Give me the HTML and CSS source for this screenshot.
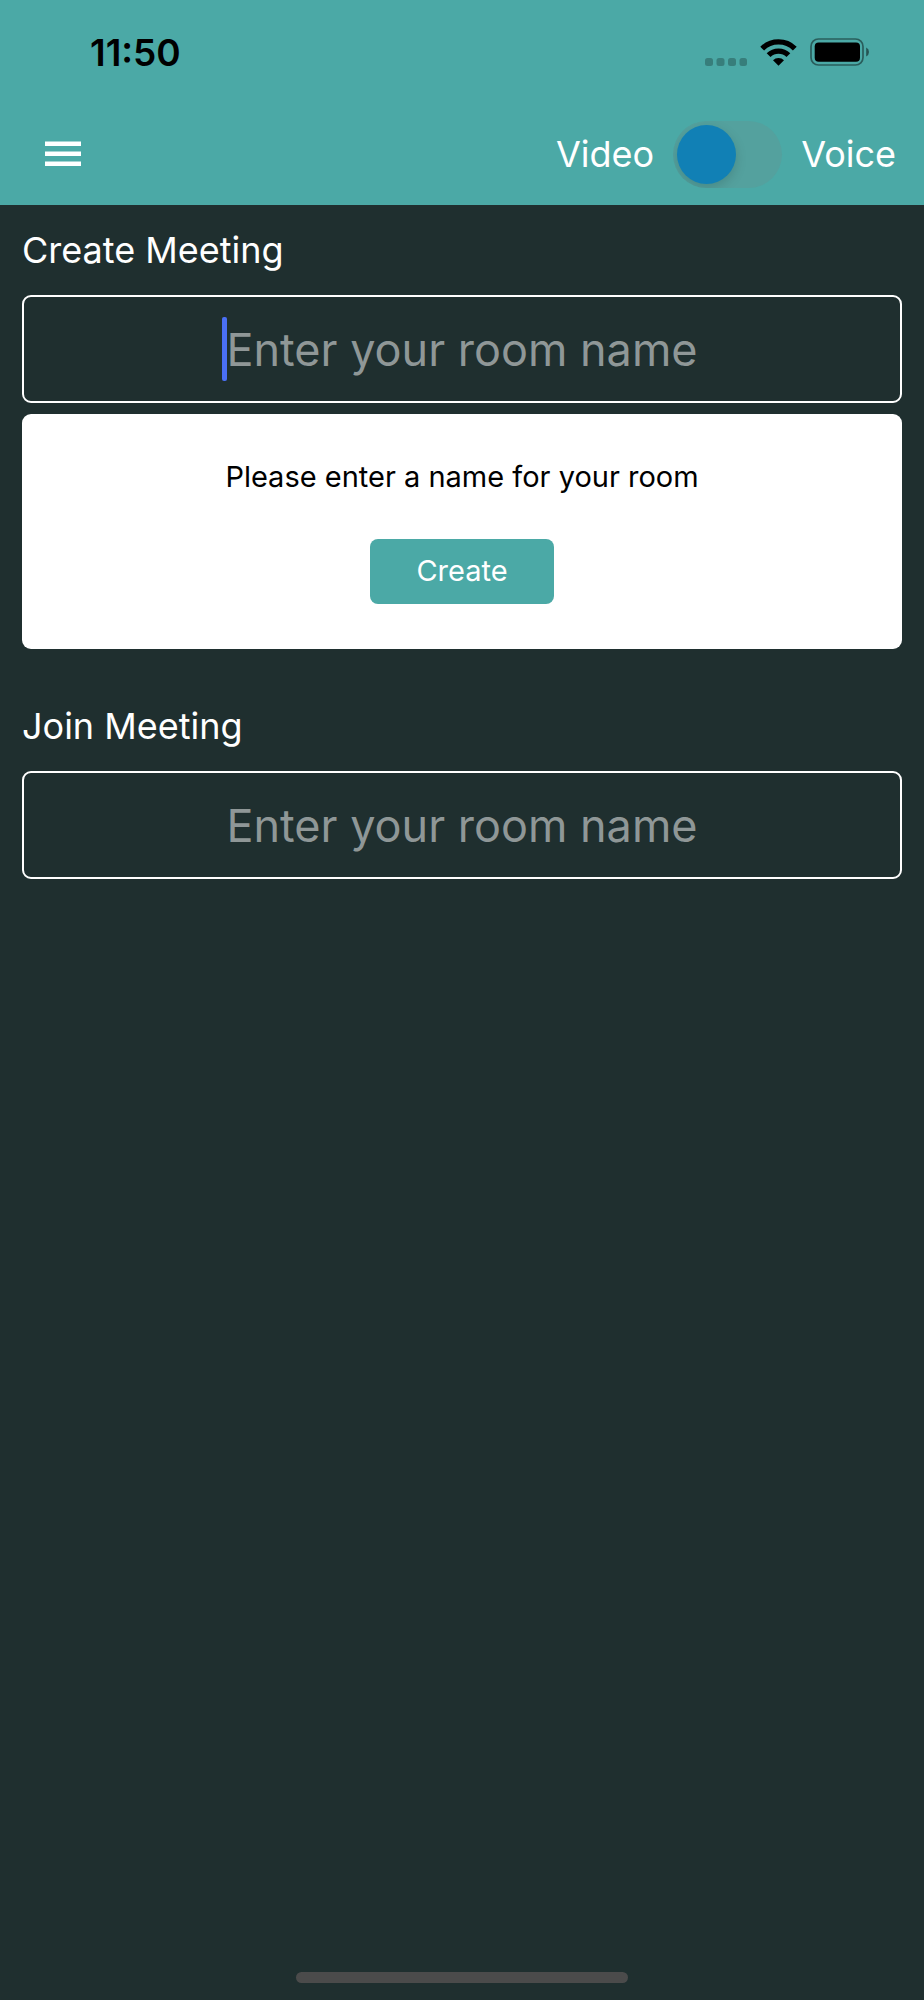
FILE: index.html
```html
<!DOCTYPE html>
<html lang="en">
<head>
<meta charset="utf-8">
<meta name="viewport" content="width=device-width, initial-scale=1">
<title>Meetings</title>
<link rel="stylesheet" href="styles.css">
</head>
<body>
<div class="app">
  <header class="header">
    <div class="status">
      <span class="time">11:50</span>
      <div class="status-icons">
        <svg class="signal" width="42" height="8" viewBox="0 0 42 8" aria-hidden="true">
          <rect x="0" y="0" width="8" height="8" rx="2.5"/>
          <rect x="11.5" y="0" width="8" height="8" rx="2.5"/>
          <rect x="23" y="0" width="8" height="8" rx="2.5"/>
          <rect x="34.5" y="0" width="7.5" height="8" rx="2.5"/>
        </svg>
        <svg class="wifi" width="37" height="27" viewBox="0 0 37 27" aria-hidden="true">
          <g fill="none" stroke="#000" stroke-width="5.4">
            <path d="M2.2 9.6A23.2 23.2 0 0 1 34.8 9.6"/>
            <path d="M8.6 16.2A14 14 0 0 1 28.4 16.2"/>
          </g>
          <path d="M18.5 26.8L13 21.2A7.8 7.8 0 0 1 24 21.2Z"/>
        </svg>
        <svg class="battery" width="60" height="28" viewBox="0 0 60 28" aria-hidden="true">
          <rect x="1" y="1" width="52" height="26" rx="7.5" fill="none" stroke="#000" stroke-opacity=".45" stroke-width="1.7"/>
          <rect x="4.7" y="4.5" width="45.3" height="19.3" rx="4"/>
          <path d="M56.2 9.6Q59 11 59 14Q59 17 56.2 18.4Z" fill-opacity=".5"/>
        </svg>
      </div>
    </div>
    <nav class="toolbar">
      <button class="menu" type="button" aria-label="Menu">
        <svg width="36" height="26" viewBox="0 0 36 26" aria-hidden="true">
          <path d="M0 .5h36v4.5H0zM0 10.5h36v4.5H0zM0 20.5h36v4.5H0z"/>
        </svg>
      </button>
      <div class="mode">
        <label for="mode">Video</label>
        <input class="switch" id="mode" type="checkbox" role="switch" aria-label="Voice mode">
        <label for="mode">Voice</label>
      </div>
    </nav>
  </header>
  <main class="content">
    <section class="section">
      <label class="title" for="create-room">Create Meeting</label>
      <div class="field">
        <input class="room" id="create-room" type="text" placeholder="Enter your room name">
        <span class="caret"></span>
      </div>
      <div class="card">
        <p class="hint">Please enter a name for your room</p>
        <button class="create" type="button">Create</button>
      </div>
    </section>
    <section class="section">
      <label class="title" for="join-room">Join Meeting</label>
      <div class="field">
        <input class="room" id="join-room" type="text" placeholder="Enter your room name">
      </div>
    </section>
  </main>
  <footer class="footer"><div class="home-bar"></div></footer>
</div>
</body>
</html>
```

FILE: styles.css
```css
* {
  box-sizing: border-box;
}

body {
  margin: 0;
  background: #1f2f2f;
  color: #fff;
  font-family: Inter, "Liberation Sans", sans-serif;
}

button,
input {
  font-family: inherit;
}

.app {
  display: flex;
  flex-direction: column;
  min-height: 100vh;
}

.header {
  background: #4ba9a6;
}

.status {
  display: flex;
  align-items: center;
  justify-content: space-between;
  height: 105px;
  padding: 0 54px 0 90px;
}

.time {
  color: #000;
  font-size: 37px;
  font-weight: 600;
}

.status-icons {
  display: flex;
  align-items: center;
  gap: 13px;
  padding-bottom: 1px;
}

.signal {
  align-self: flex-end;
  opacity: .25;
}

.toolbar {
  display: flex;
  align-items: center;
  justify-content: space-between;
  height: 100px;
  padding: 0 28px 2px 45px;
}

.menu {
  display: flex;
  padding: 0;
  border: 0;
  background: none;
  fill: #fff;
}

.mode {
  display: flex;
  align-items: center;
  gap: 19px;
  font-size: 36px;
}

.switch {
  appearance: none;
  width: 109px;
  height: 67px;
  margin: 0;
  padding: 4px;
  border-radius: 34px;
  background: #54a19e;
  overflow: hidden;
}

.switch::before {
  content: "";
  display: block;
  width: 59px;
  height: 59px;
  border-radius: 50%;
  background: #1180b5;
  box-shadow: 0 4px 12px rgba(0, 0, 0, .15);
}

.switch:checked::before {
  margin-left: auto;
}

.content {
  flex: 1;
  padding: 20px 22px;
}

.section {
  display: flex;
  flex-direction: column;
  gap: 11px;
  margin-bottom: 52px;
}

.title {
  padding-bottom: 8px;
  font-size: 36px;
  line-height: 51px;
}

.field {
  position: relative;
}

.room {
  display: block;
  width: 100%;
  height: 108px;
  padding: 0 20px;
  border: 2px solid #fff;
  border-radius: 9px;
  background: none;
  color: #fff;
  font-size: 45px;
  text-align: center;
  outline: 0;
}

.room::placeholder {
  color: #8f9797;
  opacity: 1;
}

.caret {
  position: absolute;
  top: 22px;
  left: calc(50% - 240px);
  width: 5px;
  height: 64px;
  border-radius: 2px;
  background: #4a6ff5;
}

.card {
  display: flex;
  flex-direction: column;
  align-items: center;
  gap: 42px;
  padding: 43px 20px 45px;
  border-radius: 9px;
  background: #fff;
}

.hint {
  margin: 0;
  color: #000;
  font-size: 29px;
  line-height: 40px;
}

.create {
  width: 184px;
  height: 65px;
  padding: 0 0 2px;
  border: 0;
  border-radius: 8px;
  background: #4ba9a6;
  color: #fff;
  font-size: 29px;
}

.footer {
  display: flex;
  justify-content: center;
  padding-bottom: 17px;
}

.home-bar {
  width: 36%;
  height: 11px;
  border-radius: 6px;
  background: #4b4b4b;
}
```
